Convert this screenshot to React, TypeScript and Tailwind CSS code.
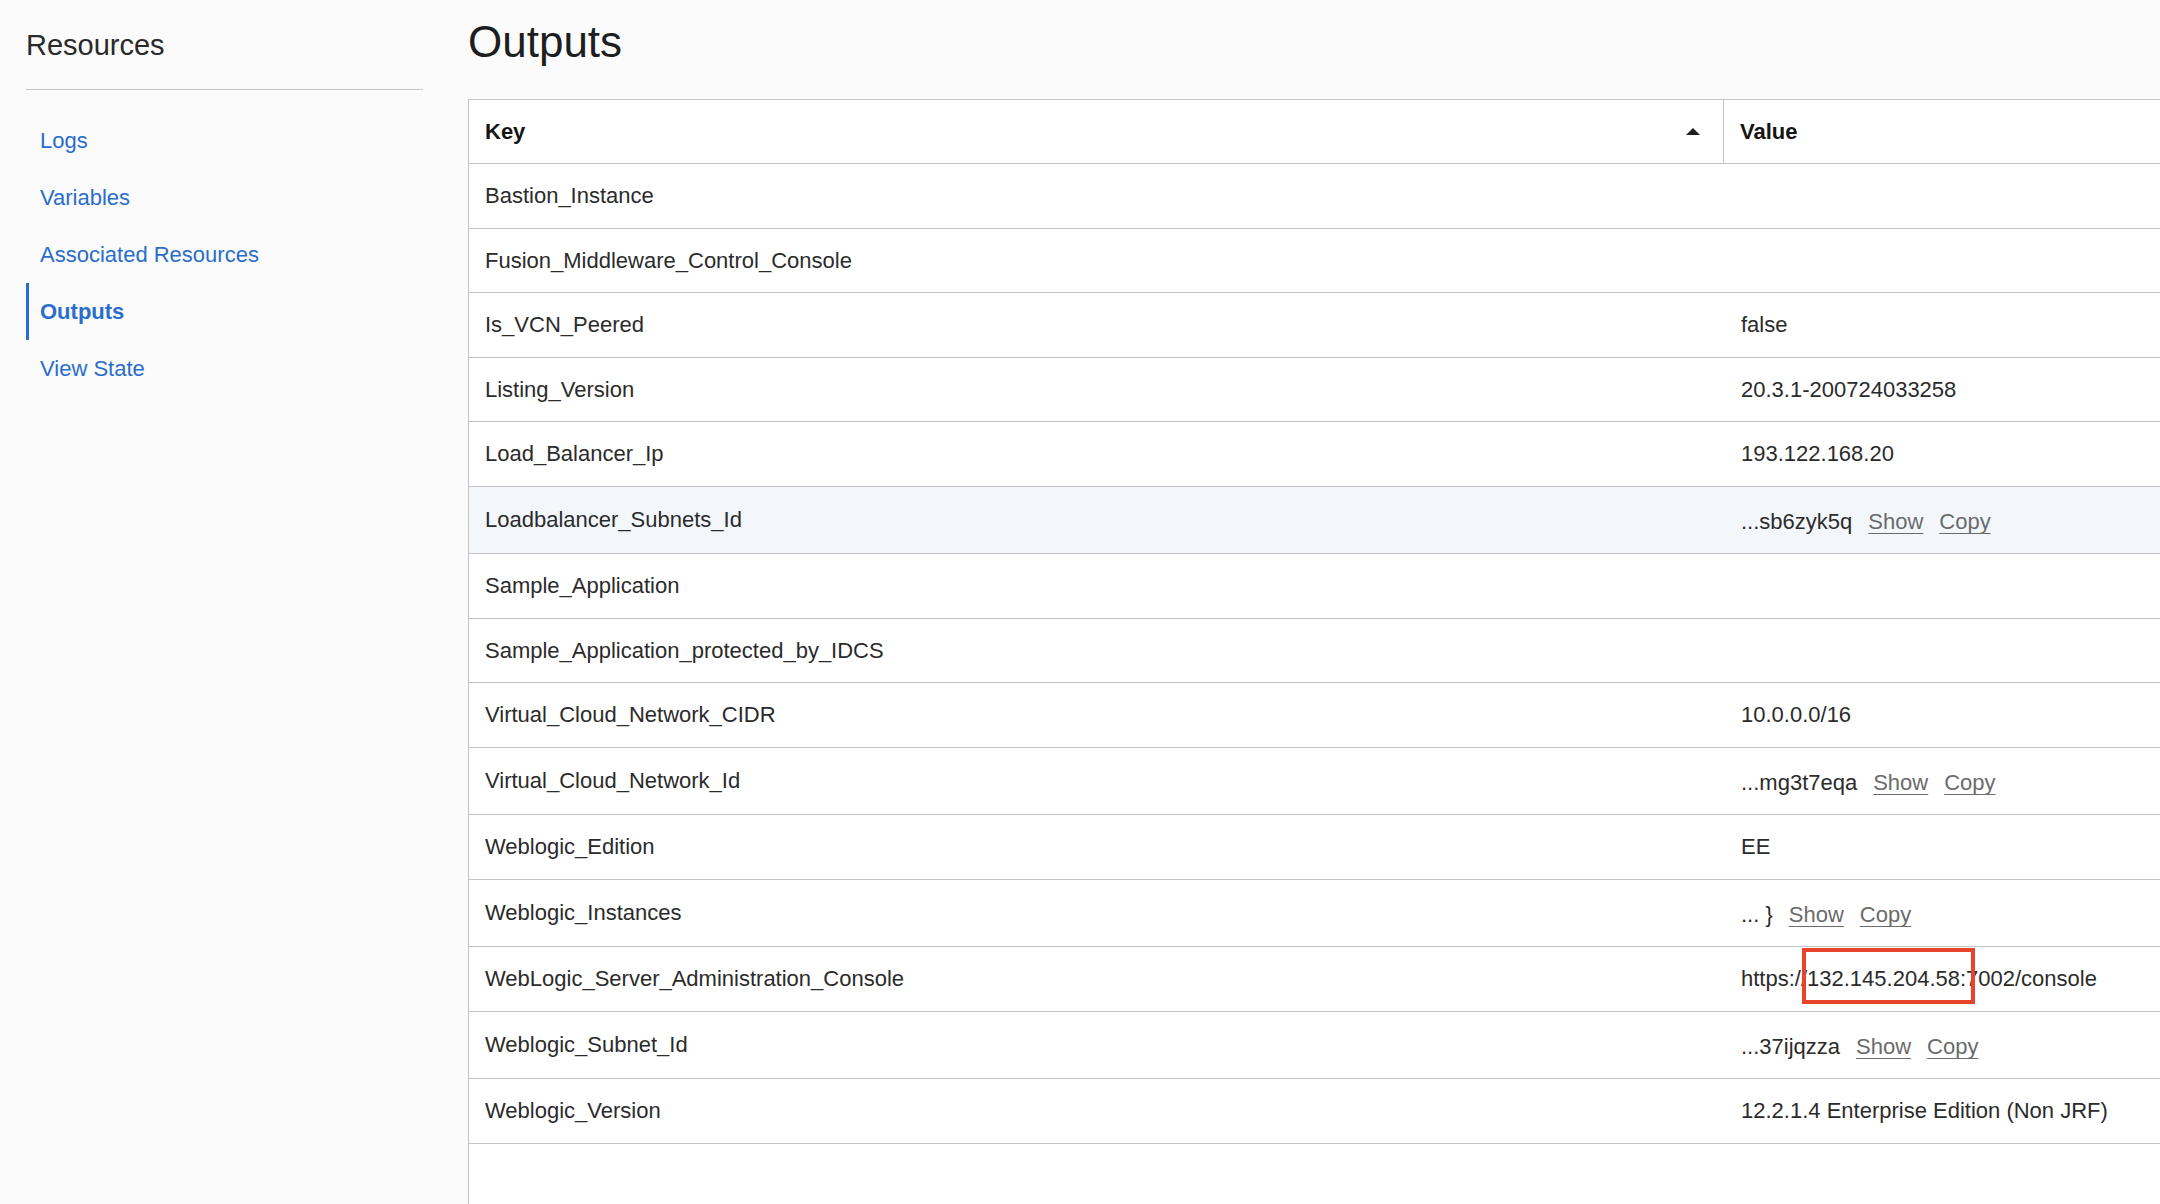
import React from 'react';

interface OutputRow {
  key: string;
  value?: string;
  links?: boolean;
  highlighted?: boolean;
  marked?: boolean;
}

const rows: OutputRow[] = [
  { key: 'Bastion_Instance' },
  { key: 'Fusion_Middleware_Control_Console' },
  { key: 'Is_VCN_Peered', value: 'false' },
  { key: 'Listing_Version', value: '20.3.1-200724033258' },
  { key: 'Load_Balancer_Ip', value: '193.122.168.20' },
  { key: 'Loadbalancer_Subnets_Id', value: '...sb6zyk5q', links: true, highlighted: true },
  { key: 'Sample_Application' },
  { key: 'Sample_Application_protected_by_IDCS' },
  { key: 'Virtual_Cloud_Network_CIDR', value: '10.0.0.0/16' },
  { key: 'Virtual_Cloud_Network_Id', value: '...mg3t7eqa', links: true },
  { key: 'Weblogic_Edition', value: 'EE' },
  { key: 'Weblogic_Instances', value: '... }', links: true },
  { key: 'WebLogic_Server_Administration_Console', value: 'https://132.145.204.58:7002/console', marked: true },
  { key: 'Weblogic_Subnet_Id', value: '...37ijqzza', links: true },
  { key: 'Weblogic_Version', value: '12.2.1.4 Enterprise Edition (Non JRF)' },
];

const navItems = ['Logs', 'Variables', 'Associated Resources', 'Outputs', 'View State'];

const Sidebar: React.FC = () => (
  <aside className="w-[468px] shrink-0 pl-[26px] pr-[45px]">
    <div className="pt-[27px] pb-[26px] border-b border-[#c2c6cb]">
      <h2 className="text-[29px] leading-[36px] text-[#2a2a2a]">Resources</h2>
    </div>
    <ul className="mt-[22px]">
      {navItems.map((item) => {
        const active = item === 'Outputs';
        return (
          <li
            key={item}
            className={`h-[57px] flex items-center pl-[11px] border-l-[3px] ${
              active ? 'border-[#2a6dcb] font-bold' : 'border-transparent'
            }`}
          >
            <a href="#" className="text-[22px] text-[#2a6dcb]">
              {item}
            </a>
          </li>
        );
      })}
    </ul>
  </aside>
);

const ValueCell: React.FC<{ row: OutputRow }> = ({ row }) => {
  if (!row.value) return null;
  return (
    <div className="flex items-center">
      <span className="relative">
        {row.value}
        {/* red annotation box over the IP part of the url */}
        {row.marked && (
          <span className="absolute left-[61px] top-[-14px] w-[173px] h-[56px] border-[4px] border-[#e8432b]" />
        )}
      </span>
      {row.links && (
        <>
          <a href="#" className="ml-[16px] text-[#6b6b6b] underline underline-offset-[4px] decoration-1">
            Show
          </a>
          <a href="#" className="ml-[16px] text-[#6b6b6b] underline underline-offset-[4px] decoration-1">
            Copy
          </a>
        </>
      )}
    </div>
  );
};

export default function App() {
  return (
    <div
      className="flex min-h-[1204px] h-[1204px] overflow-hidden bg-[#fbfbfb] text-[#2b2b2b]"
      style={{ fontFamily: '"Liberation Sans", Arial, Helvetica, sans-serif' }}
    >
      <Sidebar />
      <main className="flex-1 flex flex-col min-w-0">
        <h1 className="pt-[16px] pb-[31px] text-[44px] leading-[52px] text-[#1e1e1e]">Outputs</h1>
        <div className="flex-1 bg-white border-l border-t border-[#c0c4c9] text-[22px]">
          <div className="flex h-[64px] border-b border-[#c0c4c9] font-bold text-[#161513]">
            <div className="w-[1255px] shrink-0 flex items-center justify-between pl-[16px] pr-[23px] border-r border-[#c0c4c9]">
              <span>Key</span>
              <svg width="14" height="7" viewBox="0 0 14 7">
                <polygon points="7,0 14,7 0,7" fill="#1f1f1f" />
              </svg>
            </div>
            <div className="flex-1 flex items-center pl-[16px]">Value</div>
          </div>
          {rows.map((row) => (
            <div
              key={row.key}
              className={`flex border-b border-[#c0c4c9] ${row.links ? 'h-[67.5px]' : 'h-[64.5px]'} ${
                row.highlighted ? 'bg-[#f3f7fc]' : ''
              }`}
            >
              <div className="w-[1256px] shrink-0 flex items-center pl-[16px]">{row.key}</div>
              <div className={`flex-1 flex items-center pl-[16px] ${row.links ? 'pt-[4px]' : ''}`}>
                <ValueCell row={row} />
              </div>
            </div>
          ))}
        </div>
      </main>
    </div>
  );
}
